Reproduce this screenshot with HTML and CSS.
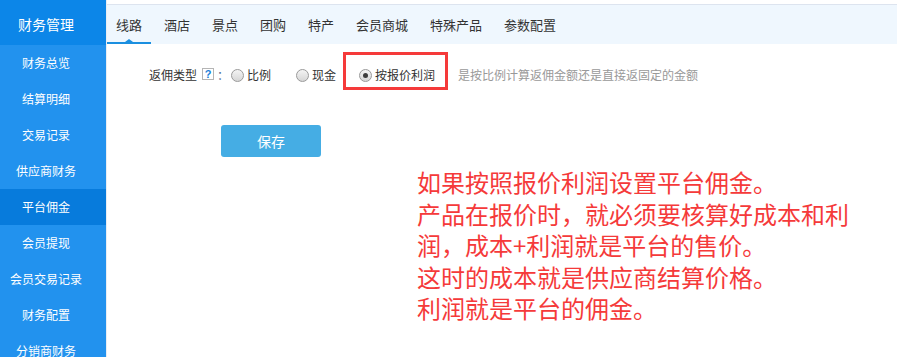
FILE: index.html
```html
<!DOCTYPE html>
<html lang="zh-CN">
<head>
  <meta charset="UTF-8" />
  <meta name="viewport" content="width=device-width, initial-scale=1.0"/>
  <title>财务管理 - 平台佣金</title>
  <link rel="stylesheet" href="styles.css">
</head>
<body>
  <div class="layout">
    <div class="sidebar">
      <div class="sidebar-title">财务管理</div>
      <div class="menu-item">财务总览</div>
      <div class="menu-item">结算明细</div>
      <div class="menu-item">交易记录</div>
      <div class="menu-item">供应商财务</div>
      <div class="menu-item active">平台佣金</div>
      <div class="menu-item">会员提现</div>
      <div class="menu-item">会员交易记录</div>
      <div class="menu-item">财务配置</div>
      <div class="menu-item">分销商财务</div>
    </div>

    <div class="main">
      <div class="tabs">
        <div class="tab active">线路</div>
        <div class="tab">酒店</div>
        <div class="tab">景点</div>
        <div class="tab">团购</div>
        <div class="tab">特产</div>
        <div class="tab">会员商城</div>
        <div class="tab">特殊产品</div>
        <div class="tab">参数配置</div>
      </div>

      <div class="content">
        <div class="form-row">
          <span class="field-label">返佣类型</span>
          <span class="help">?</span>
          <span class="colon">：</span>
          <label class="option first"><span class="radio"></span>比例</label>
          <label class="option"><span class="radio"></span>现金</label>
          <div class="highlight">
            <label class="option"><span class="radio checked"></span>按报价利润</label>
          </div>
          <span class="hint">是按比例计算返佣金额还是直接返固定的金额</span>
        </div>

        <button class="save-btn">保存</button>

        <p class="note">
          如果按照报价利润设置平台佣金。<br>
          产品在报价时，就必须要核算好成本和利<br>
          润，成本+利润就是平台的售价。<br>
          这时的成本就是供应商结算价格。<br>
          利润就是平台的佣金。
        </p>
      </div>
    </div>
  </div>
</body>
</html>
```

FILE: styles.css
```css
body {
  margin: 0;
  font-family: "Noto Sans CJK SC", "Noto Sans", sans-serif;
  background: #fff;
  overflow: hidden;
}

.layout {
  display: flex;
  height: 100vh;
}

.sidebar {
  width: 106px;
  flex-shrink: 0;
  background: #2292ee;
  border-right: 1px solid #e8edf3;
  overflow: hidden;
  color: #fff;
}

.sidebar-title {
  background: #0c86e8;
  height: 41px;
  padding: 4px 14px 0 0;
  line-height: 41px;
  font-size: 14px;
  text-align: center;
}

.menu-item {
  height: 36px;
  line-height: 36px;
  padding-right: 14px;
  font-size: 12px;
  text-align: center;
}

.menu-item.active {
  background: #077bdc;
}

.main {
  flex: 1;
  padding-top: 4px;
}

.tabs {
  display: flex;
  gap: 4px;
  height: 39px;
  background: #eff7fe;
  border-top: 1px solid #dde4ef;
}

.tab {
  position: relative;
  padding: 0 9px;
  line-height: 39px;
  font-size: 13px;
  color: #333;
}

.tab.active::after {
  content: "";
  position: absolute;
  left: 0;
  right: 0;
  bottom: 0;
  height: 2px;
  background: #1a8fe0;
}

.tab.active::before {
  content: "";
  position: absolute;
  left: 50%;
  bottom: 2px;
  margin-left: -4px;
  border: 4px solid transparent;
  border-bottom: 3px solid #1a8fe0;
  border-top: 0;
}

.content {
  padding: 8px 0 0 42px;
}

.form-row {
  display: flex;
  align-items: flex-end;
  font-size: 12px;
  color: #333;
}

.form-row > span,
.form-row > .option {
  line-height: 20px;
  margin-bottom: 5px;
}

.help {
  display: inline-block;
  width: 10px;
  height: 10px;
  line-height: 10px !important;
  margin: 0 0 10px 5px !important;
  border: 1px solid #b5b5b5;
  font-family: "Liberation Sans", Arial, sans-serif;
  font-size: 11px;
  font-weight: bold;
  color: #1a7fd8;
  text-align: center;
}

.colon {
  margin-left: 3px;
  color: #4f6f95;
}

.option {
  display: inline-flex;
  align-items: center;
  gap: 3px;
  margin-left: 25px;
}

.option.first {
  margin-left: 2px;
}

.radio {
  display: inline-block;
  width: 11px;
  height: 11px;
  border: 1px solid #9a9a9a;
  border-radius: 50%;
  background: linear-gradient(#f4f4f4, #d6d6d6);
  position: relative;
}

.radio.checked::after {
  content: "";
  position: absolute;
  left: 3px;
  top: 3px;
  width: 5px;
  height: 5px;
  border-radius: 50%;
  background: #3c3c3c;
}

.highlight {
  margin-left: 7px;
  padding: 10px 10px 2px 0;
  border: 3px solid #f53a3a;
}

.highlight .option {
  margin-left: 13px;
  line-height: 20px;
}

.hint {
  margin-left: 10px;
  color: #999;
}

.save-btn {
  display: block;
  width: 100px;
  height: 32px;
  margin: 35px 0 0 72px;
  border: 0;
  border-radius: 3px;
  background: #45ade4;
  color: #fff;
  font-family: inherit;
  font-size: 14px;
}

.note {
  margin: 9px 0 0 268px;
  font-size: 24px;
  line-height: 31.5px;
  color: #f53a3a;
}
```
